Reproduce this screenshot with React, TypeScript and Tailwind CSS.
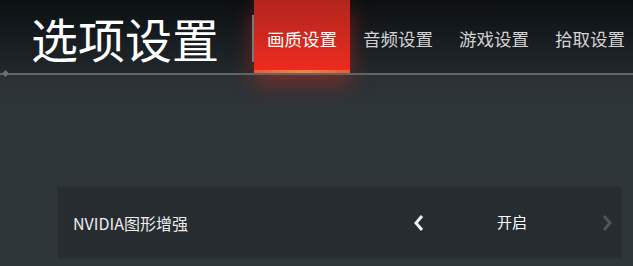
import React from "react";

const tabs = ["画质设置", "音频设置", "游戏设置", "拾取设置"];

export default function App() {
  return (
    <div
      className="w-[633px] h-[266px] overflow-hidden bg-[#2e3539] flex flex-col"
      style={{ fontFamily: '"Noto Sans CJK SC", "Noto Sans", sans-serif' }}
    >
      <div className="h-[73px] shrink-0 flex bg-gradient-to-b from-[#0c1013] to-[#21282c]">
        <div className="w-[252px] shrink-0 pl-[31px] pt-[14px] text-[47px] leading-[47px] text-white whitespace-nowrap">
          选项设置
        </div>
        <div className="relative z-10 shrink-0 mt-[15px] w-[2px] h-[47px] bg-[#75797b]" />
        <div className="flex shrink-0">
          {tabs.map((t, i) =>
            i === 0 ? (
              <div
                key={t}
                className="relative shrink-0 w-[96px] h-[73px] flex flex-col bg-gradient-to-b from-[#b3251e] via-[#cf291f] to-[#f22a1f] shadow-[0_10px_22px_rgba(255,45,25,0.4)]"
              >
                <div className="flex-1 pt-[28px] text-center text-[17.5px] leading-[22px] text-white">
                  {t}
                </div>
                <div className="h-[3px] bg-gradient-to-r from-[#f2552c] via-[#f7843a] to-[#f2552c]" />
              </div>
            ) : (
              <div
                key={t}
                className="shrink-0 w-[96px] h-[73px] pt-[28px] text-center text-[17.5px] leading-[22px] text-[#d2d3d3]"
              >
                {t}
              </div>
            )
          )}
        </div>
      </div>
      <div className="relative h-[2px] shrink-0 bg-[#5f6467]">
        <div className="absolute left-[3px] top-[-2px] w-[5px] h-[5px] rotate-45 bg-[#6a6f72]" />
      </div>
      <div className="flex-1 bg-gradient-to-b from-[#2a3034] to-[#2f363a] to-[20%]">
        <div className="ml-[57px] mt-[111px] w-[565px] h-[73px] bg-[#272c30] border border-[#2b3135] flex items-center pl-[15px] pr-[7px]">
          <div className="flex-1 text-[16px] text-[#ececec] whitespace-nowrap">
            NVIDIA图形增强
          </div>
          <div className="w-[202px] flex items-center">
            <svg width="14" height="18" viewBox="0 0 14 18">
              <polyline
                points="10,2 4,9 10,16"
                fill="none"
                stroke="#ededed"
                strokeWidth="3"
              />
            </svg>
            <div className="flex-1 text-center text-[15px] text-white pr-[2px]">
              开启
            </div>
            <svg width="14" height="18" viewBox="0 0 14 18">
              <polyline
                points="4,2 10,9 4,16"
                fill="none"
                stroke="#4e5457"
                strokeWidth="3"
              />
            </svg>
          </div>
        </div>
      </div>
    </div>
  );
}
